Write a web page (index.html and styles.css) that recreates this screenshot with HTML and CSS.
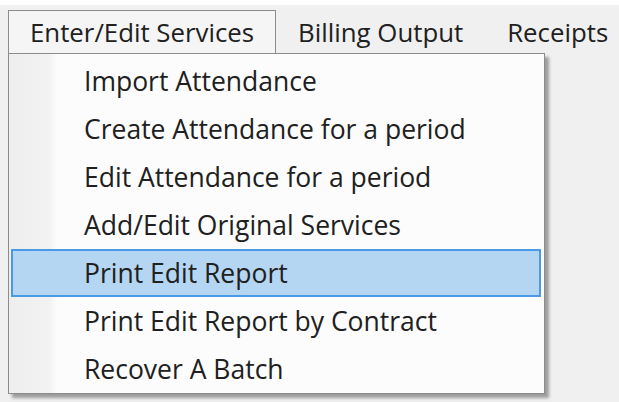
FILE: index.html
```html
<!DOCTYPE html>
<html>
<head>
<meta charset="utf-8">
<link rel="stylesheet" href="styles.css">
</head>
<body>
<div class="app">
  <nav class="menubar">
    <div class="menu-item open">Enter/Edit Services</div>
    <div class="menu-item">Billing Output</div>
    <div class="menu-item">Receipts</div>
  </nav>
  <div class="dropdown-wrap">
    <ul class="dropdown">
      <li class="entry">Import Attendance</li>
      <li class="entry">Create Attendance for a period</li>
      <li class="entry">Edit Attendance for a period</li>
      <li class="entry">Add/Edit Original Services</li>
      <li class="entry hover">Print Edit Report</li>
      <li class="entry">Print Edit Report by Contract</li>
      <li class="entry">Recover A Batch</li>
    </ul>
  </div>
</div>
</body>
</html>
```
FILE: styles.css
```css
* { box-sizing: border-box; }
html, body {
  margin: 0;
  padding: 0;
  width: 619px;
  height: 402px;
  overflow: hidden;
  background: #f0f0f0;
  font-family: "Open Sans", "Noto Sans", sans-serif;
  color: #202020;
}
.app {
  border-top: 5px solid #ffffff;
  height: 100%;
}
.menubar {
  display: flex;
  height: 48px;
  padding-top: 5px;
  padding-left: 8px;
}
.menu-item {
  font-size: 25.8px;
  line-height: 43px;
  height: 43px;
  padding: 0 21px 0 21px;
  border: 1px solid transparent;
  border-bottom: none;
  white-space: nowrap;
}
.menu-item.open {
  background: #f5f5f5;
  border-color: #8c8c8c;
}
.dropdown-wrap {
  padding-left: 8px;
}
.dropdown {
  list-style: none;
  margin: 0;
  width: 537px;
  padding: 3px 3px 0 2px;
  border: 1px solid #8c8c8c;
  background:
    linear-gradient(to right, #eeeeee 0, #f2f2f2 40px, #fcfcfc 48px, #fcfcfc 100%);
  box-shadow: 4px 4px 3px rgba(0, 0, 0, 0.35);
}
.entry {
  height: 48px;
  line-height: 46px;
  font-size: 26.5px;
  padding-left: 72px;
  border: 1px solid transparent;
  white-space: nowrap;
}
.entry.hover {
  background: #b5d6f2;
  border: 2px solid #4a9ae6;
  line-height: 44px;
  padding-left: 71px;
}
```
